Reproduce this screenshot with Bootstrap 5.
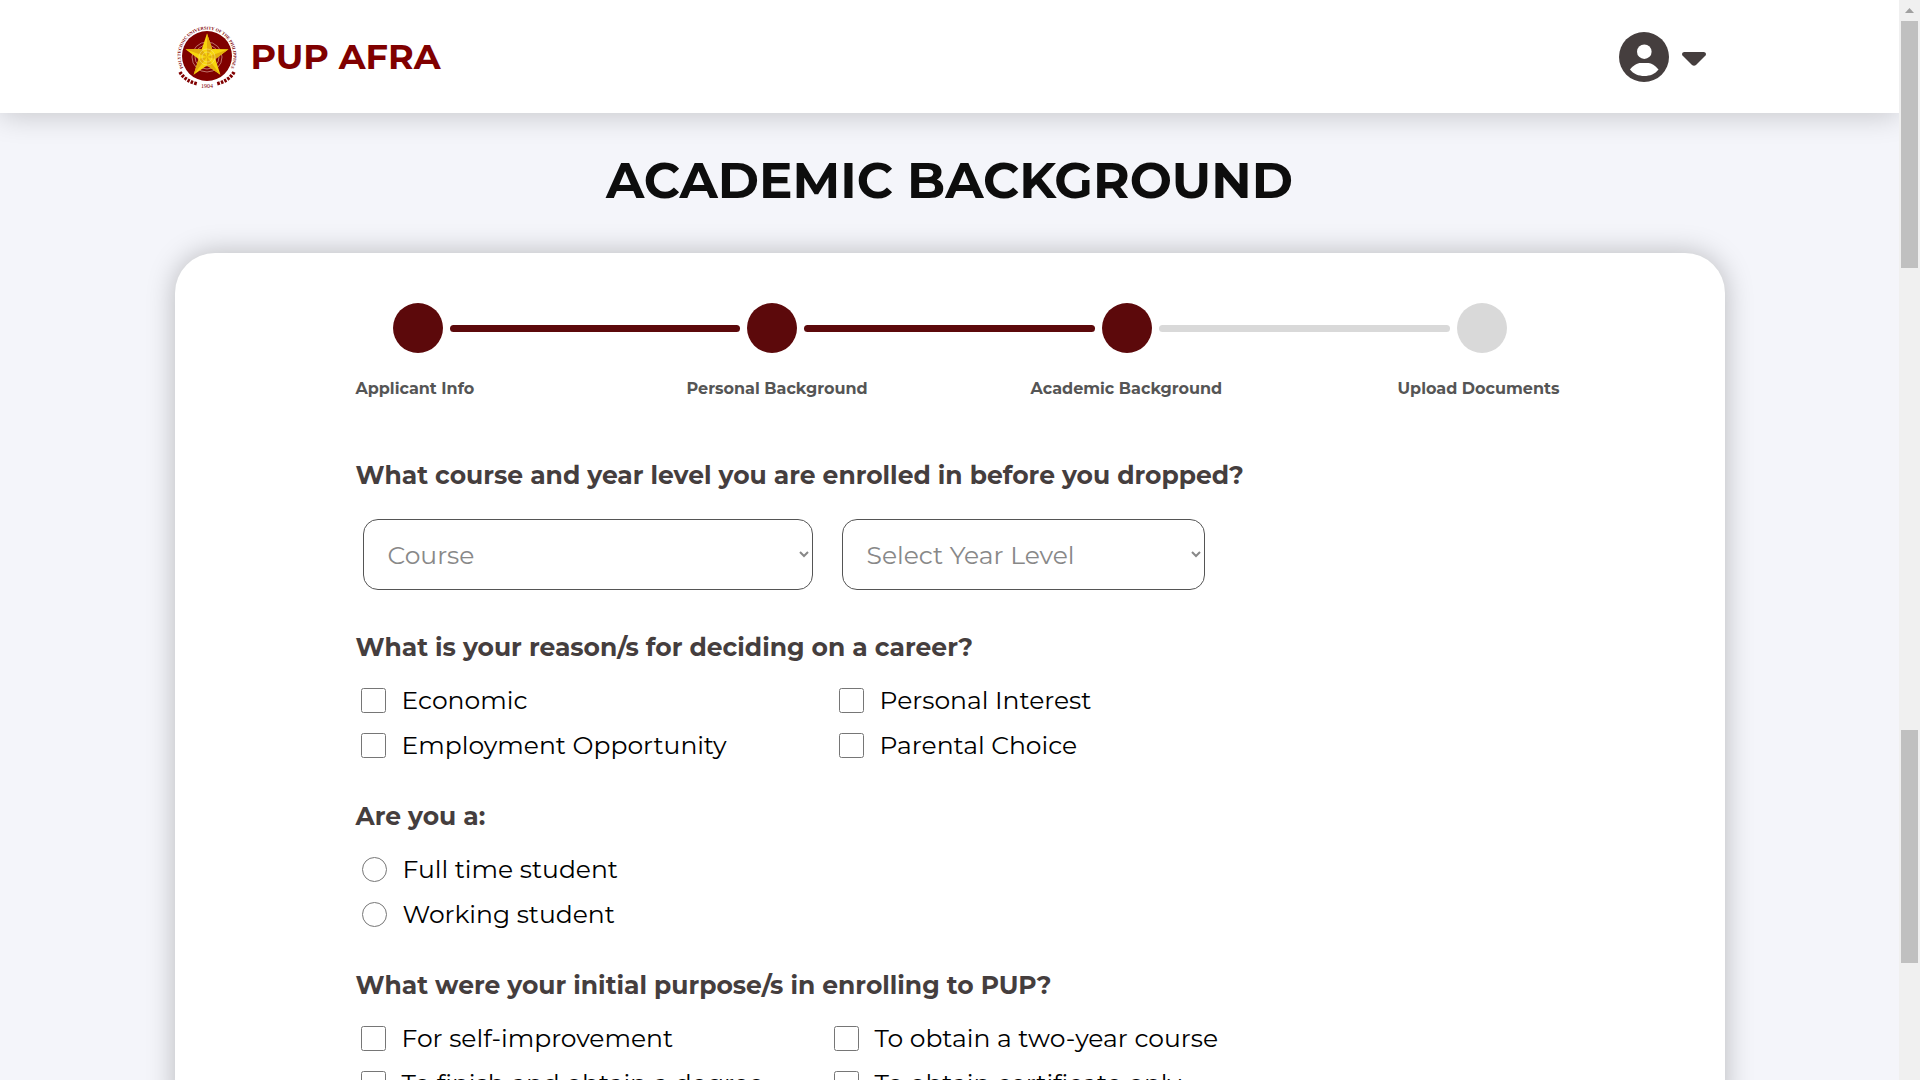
<!DOCTYPE html>
<html lang="en">
<head>
<meta charset="utf-8">
<meta name="viewport" content="width=device-width, initial-scale=1">
<title>PUP AFRA - Academic Background</title>
<link rel="stylesheet" href="https://cdn.jsdelivr.net/npm/bootstrap@5.3.0/dist/css/bootstrap.min.css">
<style>
  :root { --maroon: #800000; --wine: #5c090b; --ink: #453e3e; --idle: #d9d9d9; }
  body { font-family: Montserrat, Inter, "Open Sans", sans-serif; background: #f4f5fa; color: #000; }
  .wrap { max-width: 1550px; }
  .topbar { height: 113px; background: #fff; box-shadow: 0 2px 28px rgba(0,0,0,.2); }
  .brand-link { gap: 10px; }
  .brand-name { font-size: 35px; font-weight: 700; line-height: 44px; color: var(--maroon); }
  .account-btn { color: var(--ink); padding: 0 19px 0 0; gap: 13px; }
  .page-title { font-size: 50px; font-weight: 700; line-height: 60px; color: #0d0d0d; padding: 38px 0 42px; }
  .panel { background: #fff; border-radius: 40px 40px 0 0; box-shadow: 0 0 28px rgba(0,0,0,.25); padding-top: 50px; }
  .track { padding: 0 218px; gap: 7px; }
  .dot { width: 50px; height: 50px; border-radius: 50%; background: var(--idle); flex: none; }
  .bar { height: 7px; border-radius: 4px; background: var(--idle); flex: 1; }
  .done { background: var(--wine); }
  .steps { display: grid; grid-template-columns: 331px 344px 367px auto; padding: 0 0 0 181px; margin: 24px 0 56px; font-size: 16px; font-weight: 700; line-height: 24px; color: #555; }
  .questions { padding: 0 181px; }
  .question { margin-bottom: 30px; }
  .ask { font-size: 25px; font-weight: 700; line-height: 36px; color: var(--ink); margin-bottom: 13px; float: none; }
  .picks { gap: 29px; padding: 13px 7px 9px; }
  .pick { height: 71px; padding: 0 20px; border: 1px solid #555; border-radius: 15px; font-size: 25px; color: #888; background: #fff; appearance: auto; }
  .pick-course { width: 450px; }
  .pick-year { width: 363px; }
  .choices { display: grid; grid-template-columns: 478px 1fr; grid-auto-rows: 45px; padding-left: 5px; }
  .choices-near { grid-template-columns: 473px 1fr; }
  .choices-single { grid-template-columns: 1fr; padding-left: 6px; }
  .choice { display: flex; align-items: center; gap: 16px; font-size: 25px; line-height: 36px; font-weight: 400; padding-bottom: 2px; }
  .choice input { width: 25px; height: 25px; margin: 2px 0 0; flex: none; }
  .scroller { width: 21px; background: #f0f0f0; padding: 0 2px; }
  .arrow-cell { height: 21px; }
  .thumb { background: #c0c0c0; }
  .thumb-page { height: 247px; margin-bottom: 462px; }
  .thumb-outer { height: 233px; }
</style>
<script src="https://cdn.jsdelivr.net/npm/bootstrap@5.3.0/dist/js/bootstrap.bundle.min.js"></script>
</head>
<body class="d-flex vh-100 overflow-hidden">
<div class="flex-grow-1 overflow-hidden">
  <header class="topbar">
    <div class="wrap mx-auto h-100 d-flex justify-content-between align-items-center">
      <a href="#" class="brand-link d-flex align-items-center text-decoration-none">
        <svg width="66" height="66" viewBox="0 0 66 66" overflow="visible" aria-hidden="true">
          <defs><path id="ring" d="M12.600 50A26.500 26.500 0 1 1 51.400 50"/></defs>
          <circle cx="32" cy="32" r="25" fill="#800000"/>
          <text font-family="Liberation Serif, serif" font-size="4.400" font-weight="700" fill="#800000"><textPath href="#ring" startOffset="50%" text-anchor="middle">POLYTECHNIC UNIVERSITY OF THE PHILIPPINES</textPath></text>
          <g fill="none" stroke="#d9a49a" stroke-width=".7"><circle cx="32" cy="33" r="6"/><circle cx="32" cy="33" r="9"/><circle cx="32" cy="33" r="12"/><circle cx="32" cy="33" r="15"/></g>
          <path d="M32 9.500l5.200 15.500 16.300.2-13.100 9.800 5 15.800L32 41.500 18.600 50.800l5-15.800-13.100-9.800 16.300-.2z" fill="#f7d60d"/>
          <path d="M32 9.500V33l5.200-8zM53.500 25.200L32 33l8.400 2zM45.400 50.800L32 33v8.500zM18.600 50.800L32 33l-8.400 2zM10.500 25.200L32 33l-5.200-8z" fill="#e3ae0c"/>
          <g fill="none" stroke="#f9e98a" stroke-width=".5"><circle cx="32" cy="33" r="5"/><circle cx="32" cy="33" r="8"/></g>
          <g fill="none" stroke="#800000" stroke-width="3.500" stroke-dasharray="2.500 1.200"><path d="M5 48Q10 57 23 60"/><path d="M59 48Q54 57 41 60"/></g>
          <text x="32" y="64" text-anchor="middle" font-family="Liberation Serif, serif" font-size="6" fill="#800000">1904</text>
        </svg>
        <span class="brand-name">PUP AFRA</span>
      </a>
      <button type="button" class="account-btn btn border-0 d-flex align-items-center" aria-label="Account menu">
        <svg width="50" height="50" viewBox="0 0 50 50"><circle cx="25" cy="25" r="25" fill="currentColor"/><circle cx="25.300" cy="19.700" r="7.300" fill="#fff"/><path d="M11 37.500C14 33.500 18.500 31 21.500 31h8C32.500 31 36 33.500 39.500 37.500C36 42 31 44 25.300 44S14.500 42 11 37.500z" fill="#fff"/></svg>
        <svg width="24" height="18" viewBox="0 0 24 18"><path d="M2 4h20q3 1 1.500 3.500L14 17q-2 1.500-4 0L.5 7.500Q-1 5 2 4z" fill="currentColor"/></svg>
      </button>
    </div>
  </header>

  <main>
    <h1 class="page-title text-center mb-0">ACADEMIC BACKGROUND</h1>
    <div class="wrap mx-auto panel">
      <div class="track d-flex align-items-center" aria-hidden="true">
        <span class="dot done"></span><span class="bar done"></span>
        <span class="dot done"></span><span class="bar done"></span>
        <span class="dot done"></span><span class="bar"></span>
        <span class="dot"></span>
      </div>
      <ol class="steps list-unstyled">
        <li>Applicant Info</li>
        <li>Personal Background</li>
        <li>Academic Background</li>
        <li>Upload Documents</li>
      </ol>

      <form class="questions">
        <fieldset class="question">
          <legend class="ask">What course and year level you are enrolled in before you dropped?</legend>
          <div class="picks d-flex">
            <select class="pick pick-course" aria-label="Course"><option>Course</option></select>
            <select class="pick pick-year" aria-label="Year level"><option>Select Year Level</option></select>
          </div>
        </fieldset>
        <fieldset class="question">
          <legend class="ask">What is your reason/s for deciding on a career?</legend>
          <div class="choices">
            <label class="choice"><input type="checkbox">Economic</label>
            <label class="choice"><input type="checkbox">Personal Interest</label>
            <label class="choice"><input type="checkbox">Employment Opportunity</label>
            <label class="choice"><input type="checkbox">Parental Choice</label>
          </div>
        </fieldset>
        <fieldset class="question">
          <legend class="ask">Are you a:</legend>
          <div class="choices choices-single">
            <label class="choice"><input type="radio" name="student">Full time student</label>
            <label class="choice"><input type="radio" name="student">Working student</label>
          </div>
        </fieldset>
        <fieldset class="question">
          <legend class="ask">What were your initial purpose/s in enrolling to PUP?</legend>
          <div class="choices choices-near">
            <label class="choice"><input type="checkbox">For self-improvement</label>
            <label class="choice"><input type="checkbox">To obtain a two-year course</label>
            <label class="choice"><input type="checkbox">To finish and obtain a degree</label>
            <label class="choice"><input type="checkbox">To obtain certificate only</label>
          </div>
        </fieldset>
      </form>
    </div>
  </main>
</div>
<div class="scroller flex-shrink-0" aria-hidden="true">
  <div class="arrow-cell d-flex justify-content-center align-items-center"><svg width="9" height="5" viewBox="0 0 9 5"><path d="M0 5L4.500 0 9 5z" fill="#a0a0a0"/></svg></div>
  <div class="thumb thumb-page"></div>
  <div class="thumb thumb-outer"></div>
</div>
</body>
</html>
